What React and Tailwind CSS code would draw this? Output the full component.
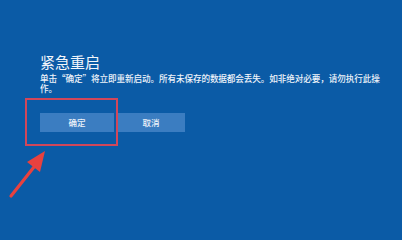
const font = { fontFamily: '"Noto Sans CJK SC", "Liberation Sans", sans-serif' };

const App = () => {
  return (
    <div
      className="relative w-[402px] h-screen min-h-[220px] overflow-hidden bg-[#0b5ba6] text-white"
      style={font}
    >
      <div className="flex flex-col pt-[52px] pl-[40px] pr-[16px]">
        <h1 className="text-[15px] leading-[20px] font-normal text-[#f2f6fb]">紧急重启</h1>
        <p className="mt-[1px] text-[8.6px] leading-[10px] font-medium text-[#eef3fa] tracking-[-0.1px]">
          单击“确定”将立即重新启动。所有未保存的数据都会丢失。如非绝对必要，请勿执行此操作。
        </p>
        <div className="flex gap-[3px] mt-[20px]">
          <button className="w-[74px] h-[19px] bg-[#3b7dc1] text-[8.5px] font-medium text-[#eef3fa]">确定</button>
          <button className="w-[68px] h-[19px] bg-[#3b7dc1] text-[8.5px] font-medium text-[#eef3fa]">取消</button>
        </div>
      </div>

      {/* red highlight box */}
      <div className="absolute left-[25px] top-[98px] w-[93px] h-[48px] border-2 border-[#d2475a]" />

      {/* red arrow */}
      <svg className="absolute left-0 top-0" width="402" height="220" viewBox="0 0 402 220">
        <path d="M11 196 L34 167" stroke="#e8413f" strokeWidth="3.2" strokeLinecap="round" />
        <path d="M45 151 L27 162 L40 172 Z" fill="#e8413f" />
      </svg>
    </div>
  );
};

export default App;
